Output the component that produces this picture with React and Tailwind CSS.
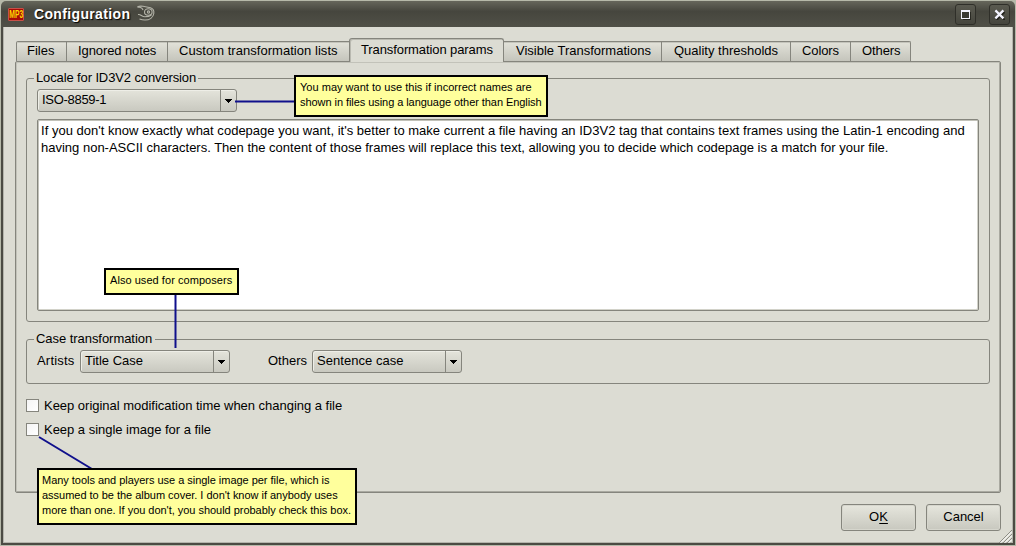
import React from "react";

const tabs = [
  { label: "Files", cls: "w-[51px] pl-[10px] rounded-tl-[2px] border-l" },
  { label: "Ignored notes", cls: "w-[101px] pl-[11px] tracking-[-0.1px]" },
  { label: "Custom transformation lists", cls: "w-[182px] pl-[11px] tracking-[0.04px]" },
  { label: "Transformation params", active: true },
  { label: "Visible Transformations", cls: "w-[158px] pl-[12px]" },
  { label: "Quality thresholds", cls: "w-[129px] pl-[12px]" },
  { label: "Colors", cls: "w-[60px] pl-[11px] tracking-[-0.1px]" },
  { label: "Others", cls: "w-[60px] pl-[11px] tracking-[-0.1px] rounded-tr-[2px]" },
];

function Tab({ label, active, cls }) {
  if (active) {
    return (
      <div className="relative z-10 -mb-px h-[24px] w-[155px] -ml-px rounded-t-[3px] border border-b-0 border-[#85857d] bg-[#dcdcd3] pl-[11px] leading-[22px] tracking-[-0.1px] shadow-[inset_1px_1px_0_#b9b9b0]">
        {label}
      </div>
    );
  }
  return (
    <div className={`h-[20px] border-t border-r border-[#85857d] bg-linear-to-b from-[#e2e2d9] to-[#c5c5bc] leading-[18px] shadow-[inset_0_1px_0_#c4c4bb] ${cls}`}>
      {label}
    </div>
  );
}

function Combo({ value, cls }) {
  return (
    <div className={`flex h-[23px] rounded-[3px] border border-[#85857d] bg-linear-to-b from-[#e4e4db] to-[#c9c9c0] shadow-[inset_1px_1px_0_#eeeee7] ${cls}`}>
      <span className="flex-1 pl-[4px] leading-[20px]">{value}</span>
      <span className="flex w-[16px] items-center justify-center border-l border-[#85857d]">
        <svg width="7" height="4" viewBox="0 0 7 4" shapeRendering="crispEdges">
          <path d="M0 0h7v1h-1v1h-1v1h-1v1h-1v-1h-1v-1h-1v-1h-1z" fill="#000" />
        </svg>
      </span>
    </div>
  );
}

function Group({ title, cls, titleCls, children }) {
  return (
    <section className={`rounded-[3px] border border-[#85857d] ${cls}`}>
      <h2 className={`-mt-[9px] ml-[7px] h-[16px] bg-[#dcdcd3] px-[2px] leading-[16px] ${titleCls}`}>{title}</h2>
      {children}
    </section>
  );
}

function Check({ label }) {
  return (
    <label className="flex h-[24px] items-center gap-[5px]">
      <span className="size-[13px] border border-[#85857d] bg-linear-to-br from-[#f4f4f4] to-white" />
      <span className="pt-[2px] tracking-[-0.02px]">{label}</span>
    </label>
  );
}

function PushButton({ children }) {
  return (
    <button className="h-[27px] w-[75px] rounded-[3px] border border-[#85857d] bg-linear-to-b from-[#e6e6dd] to-[#c8c8bf] pb-[2px] leading-[22px] shadow-[inset_0_0_0_1px_#d6d6cd]">
      {children}
    </button>
  );
}

function TitleButton({ children }) {
  return (
    <span className="flex size-[21px] items-center justify-center rounded-[3px] border border-[#2f2f29] bg-linear-to-b from-[#5a5a50] to-[#46463e]">
      {children}
    </span>
  );
}

function Note({ lines, cls }) {
  return (
    <div className={`absolute z-20 border-2 border-black bg-[#ffff9c] text-[11px] leading-[15px] ${cls}`}>
      {lines.map(([text, tracking]) => (
        <p key={text} className={tracking}>{text}</p>
      ))}
    </div>
  );
}

export default function App() {
  return (
    <div className="relative flex h-[546px] w-[1016px] flex-col overflow-hidden bg-[#b6b9a9] p-px font-['Liberation_Sans',Arial,sans-serif] text-[13px] whitespace-nowrap text-black">
      <header className="flex h-[26px] shrink-0 items-center rounded-t-[5px] bg-linear-to-b from-[#66665b] via-[#46463e] via-40% to-[#505047] pl-[7px]">
        <span className="flex h-[13px] w-[16px] items-center justify-center rounded-[1px] border border-[#c85048] bg-[#a80c06]">
          <span className="origin-center scale-x-[0.85] scale-y-[1.4] text-[8px] leading-[11px] font-bold text-[#ffd800]">MP3</span>
        </span>
        <h1 className="ml-[10px] text-[14px] font-bold tracking-[0.35px] text-white [text-shadow:1px_1px_1px_#000]">Configuration</h1>
        <svg className="ml-[7px] -mt-[2px]" width="18" height="17" viewBox="0 0 18 17" fill="none" stroke="#b4b4a9" strokeWidth="1.1">
          <path d="M.5 2C2 1 4 1 6 1.3L13.5 2.8C16 3.6 17.2 5.5 16.8 8.5C16.2 12.5 12.5 15 8 15C5.5 15 4 14.6 2.5 14" />
          <path d="M.5 2C3.5 2.2 5.5 3.2 6 5" />
          <path d="M1 9.5C4 9 4.5 11.8 8 11.8C10.5 11.8 12.5 11.4 14.5 10" />
          <ellipse cx="11.3" cy="7" rx="3.8" ry="3.2" />
          <circle cx="11.5" cy="7" r="1.1" />
        </svg>
        <div className="mt-px mr-[5px] ml-auto flex gap-[13px]">
          <TitleButton>
            <svg width="11" height="11" viewBox="0 0 11 11" shapeRendering="crispEdges">
              <path d="M3 3h8v8h-8z" fill="#292922" />
              <path d="M1 1h9v9h-9z" fill="#f4f4ff" />
              <path d="M2 3h7v6h-7z" fill="#3a3a33" />
            </svg>
          </TitleButton>
          <TitleButton>
            <svg width="11" height="11" viewBox="0 0 11 11" fill="none">
              <path d="M2.5 3l8 8M10.5 3l-8 8" stroke="#22221c" strokeWidth="2" />
              <path d="M1.4 1.4l8 8M9.4 1.4l-8 8" stroke="#f4f4ff" strokeWidth="2.2" />
            </svg>
          </TitleButton>
        </div>
      </header>

      <main className="flex flex-1 flex-col border-2 border-t-0 border-[#4b4b43] bg-[#dcdcd3] pt-[11px] pl-[12px] shadow-[inset_1px_-1px_0_#b4b4ab,inset_-1px_0_0_#b4b4ab]">
        <div className="ml-px flex h-[23px] items-end">
          {tabs.map((t) => <Tab key={t.label} {...t} />)}
        </div>
        <div className="h-[432px] w-[986px] rounded-[2px] border border-[#85857d] pt-[16px] pl-[10px] shadow-[inset_1px_1px_0_#c2c2b9,inset_-1px_-1px_0_#aaaaa1]">
          <Group title="Locale for ID3V2 conversion" cls="h-[244px] w-[964px]" titleCls="w-[164px] tracking-[-0.12px]">
            <div className="mt-[3px] pl-[10px]">
              <Combo value="ISO-8859-1" cls="w-[200px] tracking-[-0.3px]" />
              <div className="mt-[7px] h-[192px] w-[942px] rounded-[2px] border border-[#85857d] bg-white pt-[2px] pl-[3px] leading-[17px] shadow-[inset_1px_1px_0_#c2c2b9,inset_-1px_-1px_0_#d2d2c9]">
                <p className="tracking-[0.015px]">If you don't know exactly what codepage you want, it's better to make current a file having an ID3V2 tag that contains text frames using the Latin-1 encoding and</p>
                <p>having non-ASCII characters. Then the content of those frames will replace this text, allowing you to decide which codepage is a match for your file.</p>
              </div>
            </div>
          </Group>
          <Group title="Case transformation" cls="mt-[17px] h-[45px] w-[964px]" titleCls="w-[121px] tracking-[-0.05px]">
            <div className="mt-[3px] flex pl-[10px] leading-[22px]">
              <span className="w-[43px] tracking-[0.2px]">Artists</span>
              <Combo value="Title Case" cls="w-[150px]" />
              <span className="ml-[38px] w-[44px]">Others</span>
              <Combo value="Sentence case" cls="w-[150px] tracking-[0.05px]" />
            </div>
          </Group>
          <div className="mt-[9px]">
            <Check label="Keep original modification time when changing a file" />
            <Check label="Keep a single image for a file" />
          </div>
        </div>
        <div className="mt-[11px] flex gap-[10px] pl-[826px]">
          <PushButton>O<span className="underline underline-offset-2">K</span></PushButton>
          <PushButton>Cancel</PushButton>
        </div>
      </main>

      <svg className="absolute right-[4px] bottom-[3px]" width="13" height="13" viewBox="0 0 13 13">
        <path d="M0 13L13 0M4 13L13 4M8 13L13 8" stroke="#8e8e85" />
        <path d="M1.5 13L13 1.5M5.5 13L13 5.5M9.5 13L13 9.5" stroke="#fff" />
      </svg>

      <svg className="pointer-events-none absolute inset-0" width="1016" height="546" stroke="#10108c" strokeWidth="2" fill="none">
        <path d="M235 101.5H295M175.5 294V348M39 437L92 469" />
      </svg>
      <Note
        cls="top-[75px] left-[294px] h-[42px] w-[254px] pt-[3px] pl-[4px]"
        lines={[["You may want to use this if incorrect names are", "tracking-[0.02px]"], ["shown in files using a language other than English", "tracking-[-0.06px]"]]}
      />
      <Note cls="top-[268px] left-[104px] h-[27px] w-[135px] pt-[3px] pl-[4px]" lines={[["Also used for composers", "tracking-[0.05px]"]]} />
      <Note
        cls="top-[468px] left-[37px] h-[57px] w-[320px] pt-[3px] pl-[3px]"
        lines={[
          ["Many tools and players use a single image per file, which is", "tracking-[-0.03px]"],
          ["assumed to be the album cover. I don't know if anybody uses", "tracking-[-0.02px]"],
          ["more than one. If you don't, you should probably check this box.", "tracking-[-0.03px]"],
        ]}
      />
    </div>
  );
}
